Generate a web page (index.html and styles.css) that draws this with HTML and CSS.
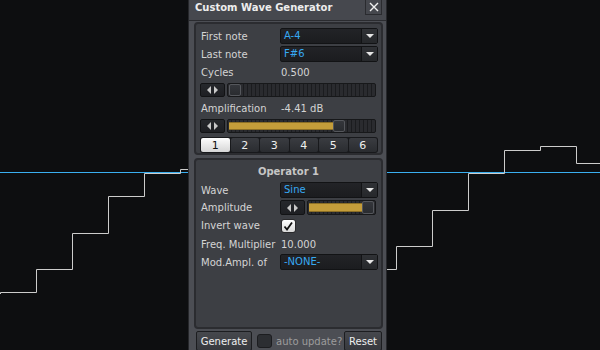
FILE: index.html
```html
<!DOCTYPE html>
<html lang="en">

<head>
    <meta charset="UTF-8">
    <title>Custom Wave Generator</title>
    <link rel="stylesheet" href="styles.css">
</head>

<body class="desk">
    <!-- oscilloscope canvas behind the dialog -->
    <svg class="scope" width="600" height="350" viewBox="0 0 600 350">
        <line class="scope-axis" x1="0" y1="172.5" x2="600" y2="172.5" />
        <polyline class="scope-wave"
            points="0.5,294 0.5,292.5 36.5,292.5 36.5,269.5 72.5,269.5 72.5,233.5 108.5,233.5 108.5,196.5 144.5,196.5 144.5,173.5 180.5,173.5 180.5,169.5 230,169.5" />
        <polyline class="scope-wave"
            points="370,269.5 396.5,269.5 396.5,246.5 432.5,246.5 432.5,210.5 468.5,210.5 468.5,173.5 504.5,173.5 504.5,150.5 540.5,150.5 540.5,146.5 576.5,146.5 576.5,163.5 600,163.5" />
    </svg>

    <div class="window">
        <div class="titlebar">
            <span class="title">Custom Wave Generator</span>
            <div class="close-btn">
                <svg width="10" height="10" viewBox="0 0 10 10">
                    <path d="M1 1 L9 9 M9 1 L1 9" stroke="#f0f0f0" stroke-width="1.4" />
                </svg>
            </div>
        </div>

        <div class="group group-main">
            <div class="row">
                <span class="label">First note</span>
                <div class="combo"><span class="combo-text">A-4</span><span class="combo-arrow"></span></div>
            </div>
            <div class="row">
                <span class="label">Last note</span>
                <div class="combo"><span class="combo-text">F#6</span><span class="combo-arrow"></span></div>
            </div>
            <div class="row">
                <span class="label">Cycles</span>
                <span class="value">0.500</span>
            </div>
            <div class="slider-row">
                <div class="spin"><span class="tri-left"></span><span class="tri-right"></span></div>
                <div class="track track-wide">
                    <div class="fill" style="width: 0px"></div>
                    <div class="handle"></div>
                </div>
            </div>
            <div class="row">
                <span class="label">Amplification</span>
                <span class="value">-4.41 dB</span>
            </div>
            <div class="slider-row">
                <div class="spin"><span class="tri-left"></span><span class="tri-right"></span></div>
                <div class="track track-wide">
                    <div class="fill" style="width: 104px"></div>
                    <div class="handle"></div>
                </div>
            </div>
            <div class="tabs">
                <div class="tab active">1</div>
                <div class="tab">2</div>
                <div class="tab">3</div>
                <div class="tab">4</div>
                <div class="tab">5</div>
                <div class="tab">6</div>
            </div>
        </div>

        <div class="group group-op">
            <div class="op-title">Operator 1</div>
            <div class="row">
                <span class="label">Wave</span>
                <div class="combo"><span class="combo-text">Sine</span><span class="combo-arrow"></span></div>
            </div>
            <div class="row row-slider">
                <span class="label">Amplitude</span>
                <div class="spin"><span class="tri-left"></span><span class="tri-right"></span></div>
                <div class="track track-short">
                    <div class="fill" style="width: 55px"></div>
                    <div class="handle"></div>
                </div>
            </div>
            <div class="row row-check">
                <span class="label">Invert wave</span>
                <div class="check">
                    <svg width="13" height="12" viewBox="0 0 13 12">
                        <path d="M2.5 6.5 L5 9.5 L10 2.5" fill="none" stroke="#111" stroke-width="1.8" />
                    </svg>
                </div>
            </div>
            <div class="row">
                <span class="label">Freq. Multiplier</span>
                <span class="value">10.000</span>
            </div>
            <div class="row">
                <span class="label">Mod.Ampl. of</span>
                <div class="combo"><span class="combo-text">-NONE-</span><span class="combo-arrow"></span></div>
            </div>
        </div>

        <div class="footer">
            <button class="button button-generate">Generate</button>
            <div class="check-dark"></div>
            <span class="muted">auto update?</span>
            <button class="button button-reset">Reset</button>
        </div>
    </div>
</body>

</html>
```

FILE: styles.css
```css
* {
    box-sizing: border-box;
}

.desk {
    position: relative;
    margin: 0;
    width: 600px;
    height: 350px;
    overflow: hidden;
    background: #0d0e10;
    font-family: "DejaVu Sans", sans-serif;
    font-size: 10px;
    color: #d4d4d4;
}

.scope {
    position: absolute;
    left: 0;
    top: 0;
}

.scope-axis {
    stroke: #3aaff0;
    stroke-width: 1;
}

.scope-wave {
    fill: none;
    stroke: #cccccc;
    stroke-width: 1;
}

.window {
    position: absolute;
    left: 188px;
    top: 0;
    width: 199px;
    height: 362px;
    background: #4c4e54;
    border: 1px solid #26272b;
    border-top: 0;
}

.titlebar {
    display: flex;
    align-items: flex-start;
    height: 21px;
    padding-left: 6px;
    background: #46484e;
    border-bottom: 1px solid #2a2b2f;
}

.title {
    flex: 1;
    margin-top: 2px;
    font-weight: bold;
    color: #ededed;
}

.close-btn {
    display: flex;
    align-items: center;
    justify-content: center;
    width: 17px;
    height: 15px;
    margin-right: 4px;
    border: 1px solid #2a2b2f;
    border-top: 0;
    background: #45474d;
}

.group {
    display: flex;
    flex-direction: column;
    gap: 2px;
    width: 189px;
    margin-left: 5px;
    padding-top: 4px;
    background: #3d3f44;
    border: 2px solid #2b2c30;
    border-radius: 4px;
}

.group-main {
    height: 133px;
    margin-top: 1px;
}

.group-op {
    height: 171px;
    margin-top: 3px;
}

.row {
    display: flex;
    align-items: center;
    height: 16px;
    padding-left: 5px;
}

.label {
    width: 79px;
    flex-shrink: 0;
    white-space: nowrap;
}

.value {
    padding-left: 1px;
}

.combo {
    display: flex;
    width: 98px;
    height: 16px;
    background: linear-gradient(#222327, #1b1c1f);
    border: 1px solid #121315;
    border-radius: 2px;
}

.combo-text {
    flex: 1;
    padding-left: 3px;
    line-height: 14px;
    color: #37a9f3;
}

.combo-arrow {
    display: flex;
    align-items: center;
    justify-content: center;
    width: 16px;
    background: linear-gradient(#303236, #26282b);
    border-left: 1px solid #121315;
}

.combo-arrow::after {
    content: "";
    border-top: 4px solid #e6e6e6;
    border-left: 4px solid transparent;
    border-right: 4px solid transparent;
}

.slider-row {
    display: flex;
    gap: 2px;
    height: 14px;
    margin: 1px 0;
    padding-left: 4px;
}

.row-slider {
    gap: 2px;
    height: 15px;
}

.row-slider .label {
    margin-right: -2px;
}

.spin {
    display: flex;
    align-items: center;
    justify-content: center;
    gap: 3px;
    width: 25px;
    height: 100%;
    background: linear-gradient(#26282c, #1e1f23);
    border: 1px solid #121315;
    border-radius: 2px;
}

.tri-left {
    border-right: 4px solid #c8c8c8;
    border-top: 4px solid transparent;
    border-bottom: 4px solid transparent;
}

.tri-right {
    border-left: 4px solid #c8c8c8;
    border-top: 4px solid transparent;
    border-bottom: 4px solid transparent;
}

.track {
    display: flex;
    align-items: stretch;
    height: 100%;
    padding: 1px;
    background: repeating-linear-gradient(90deg, #2a2b2f 0 3px, #1b1c1f 3px 4px);
    border: 1px solid #17181a;
    border-radius: 2px;
}

.track-wide {
    width: 149px;
}

.track-short {
    width: 69px;
}

.fill {
    margin: 1px 0;
    background: #c49d3a;
    border-top: 1px solid #8c6f26;
    border-bottom: 1px solid #8c6f26;
}

.handle {
    width: 12px;
    margin: -1px 0;
    background: linear-gradient(#34363b, #2a2c30);
    border: 1px solid #55575c;
    border-radius: 2px;
}

.tabs {
    display: grid;
    grid-template-columns: repeat(6, 1fr);
    gap: 1px;
    width: 178px;
    height: 16px;
    margin: 1px 0 0 4px;
    padding: 1px;
    background: #18191c;
    border-radius: 3px;
}

.tab {
    display: flex;
    align-items: center;
    justify-content: center;
    background: linear-gradient(#3a3c41, #2a2c30);
    border-radius: 2px;
    color: #eeeeee;
    font-size: 11px;
}

.tab.active {
    background: linear-gradient(#fdfdfd, #d6d6d6);
    color: #111111;
}

.op-title {
    height: 16px;
    line-height: 16px;
    text-align: center;
    font-weight: bold;
    color: #c6c6c6;
}

.row-check {
    height: 17px;
}

.check {
    display: flex;
    align-items: center;
    justify-content: center;
    width: 15px;
    height: 14px;
    margin-left: 1px;
    background: linear-gradient(#ffffff, #d8d8d8);
    border: 1px solid #2a2a2c;
    border-radius: 3px;
}

.footer {
    display: flex;
    align-items: center;
    height: 20px;
    margin: 2px 0 0 7px;
    padding-right: 4px;
}

.button {
    height: 20px;
    padding: 0;
    font: inherit;
    color: #eeeeee;
    background: linear-gradient(#46484d, #37393e);
    border: 1px solid #1c1d20;
    border-radius: 2px;
}

.button-generate {
    width: 56px;
}

.button-reset {
    width: 38px;
    margin-left: auto;
}

.check-dark {
    width: 15px;
    height: 14px;
    margin: 0 4px 0 5px;
    background: #2c2e32;
    border: 1px solid #1c1d20;
    border-radius: 3px;
}

.muted {
    color: #9c9c9c;
}
```
